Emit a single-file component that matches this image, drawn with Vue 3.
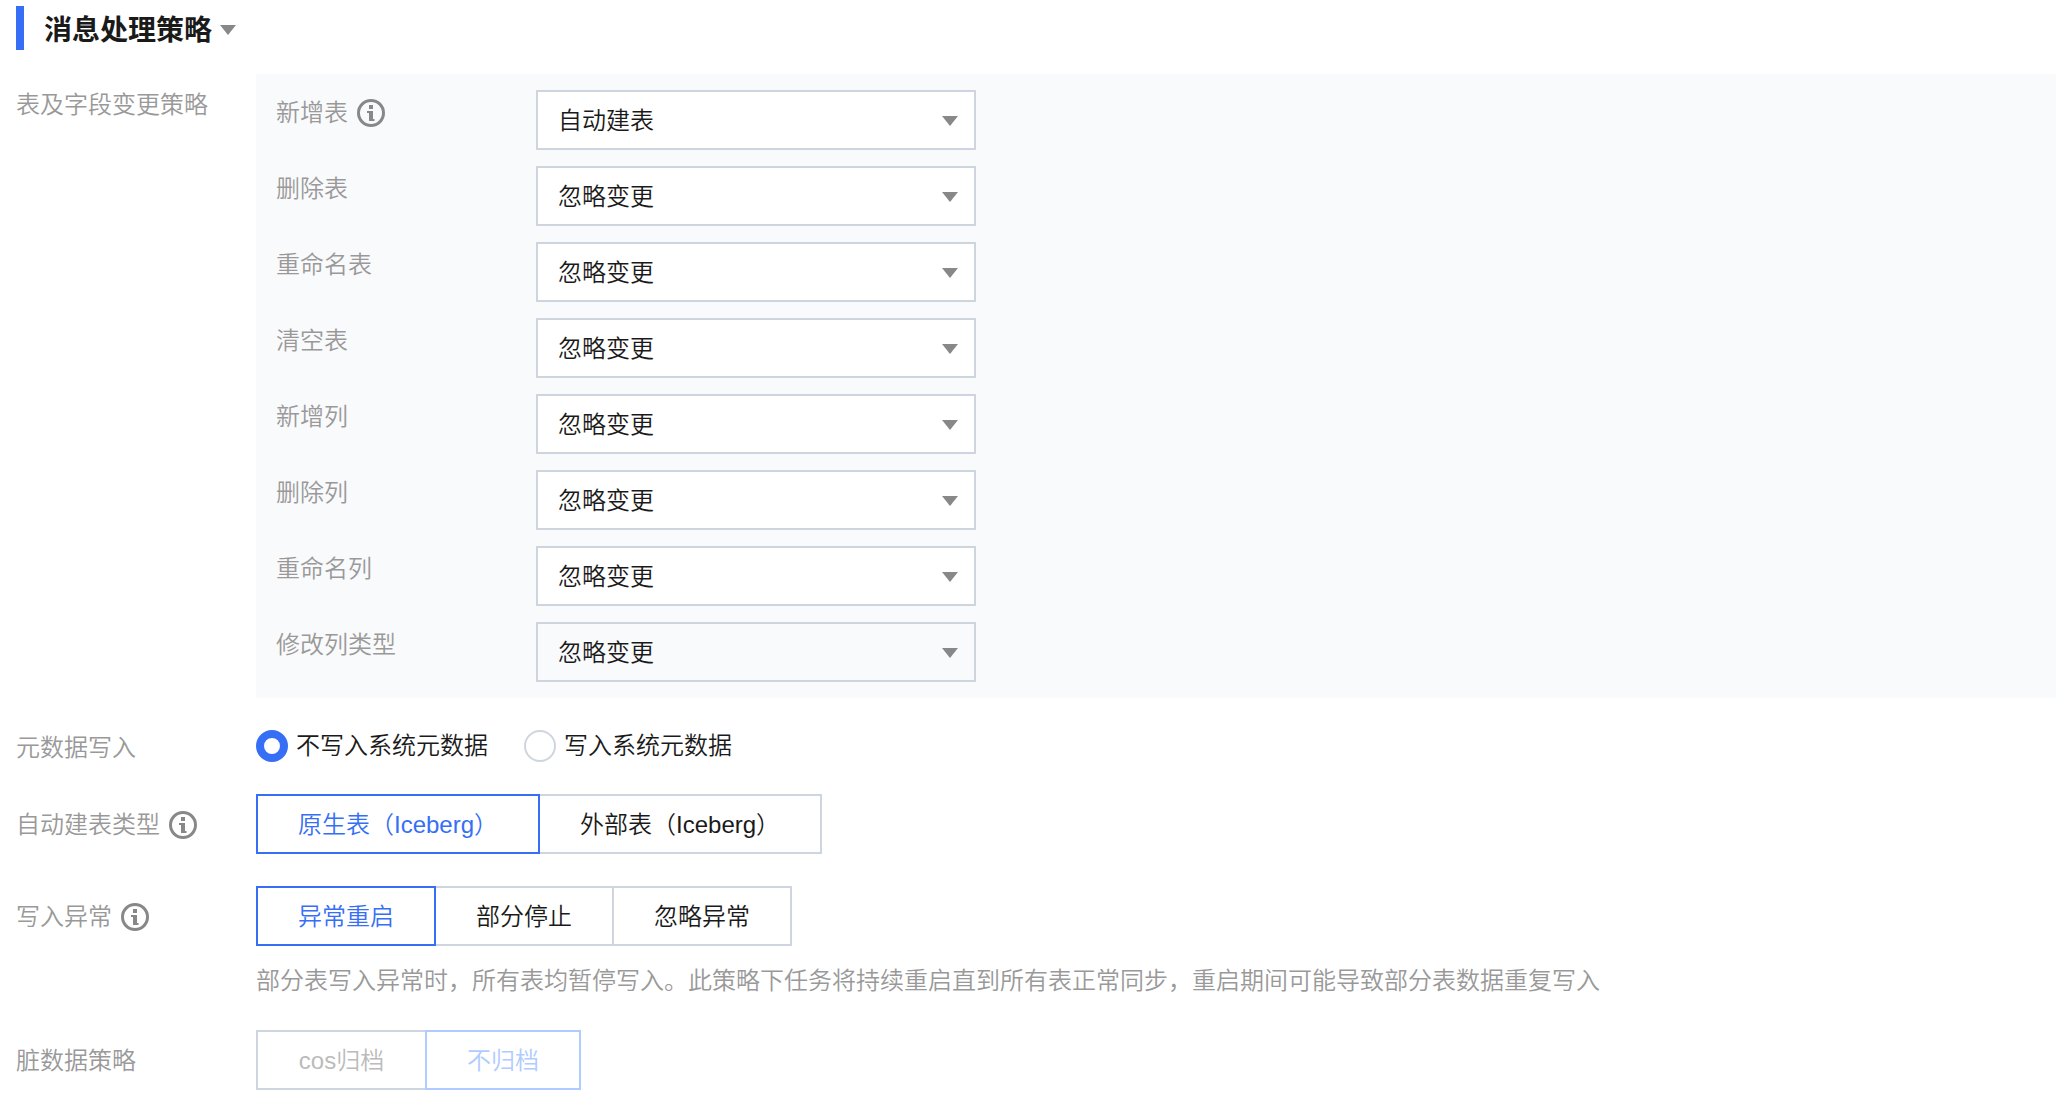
<script setup>
import { ref, reactive } from 'vue'

const open = ref(true)

const changeRules = reactive([
  { id: 'add-table', label: '新增表', value: '自动建表', options: ['自动建表', '忽略变更'], info: true },
  { id: 'drop-table', label: '删除表', value: '忽略变更', options: ['忽略变更'] },
  { id: 'rename-table', label: '重命名表', value: '忽略变更', options: ['忽略变更'] },
  { id: 'truncate-table', label: '清空表', value: '忽略变更', options: ['忽略变更'] },
  { id: 'add-column', label: '新增列', value: '忽略变更', options: ['忽略变更'] },
  { id: 'drop-column', label: '删除列', value: '忽略变更', options: ['忽略变更'] },
  { id: 'rename-column', label: '重命名列', value: '忽略变更', options: ['忽略变更'] },
  { id: 'alter-column', label: '修改列类型', value: '忽略变更', options: ['忽略变更'], muted: true },
])

const metaOptions = ['不写入系统元数据', '写入系统元数据']
const meta = ref(metaOptions[0])

const tableTypes = ['原生表（Iceberg）', '外部表（Iceberg）']
const tableType = ref(tableTypes[0])

const errorModes = ['异常重启', '部分停止', '忽略异常']
const errorMode = ref(errorModes[0])

const dirtyModes = ['cos归档', '不归档']
const dirtyMode = ref(dirtyModes[1])

const InfoIcon = 'M12 6h4v4h-4zM10 12h6v8h1.5v2h-5.500v-8h-2z'
</script>

<template>
  <main class="page">
    <h2 class="title">
      <button type="button" class="toggle" :aria-expanded="open" @click="open = !open">
        消息处理策略
        <svg class="caret" viewBox="0 0 16 10" aria-hidden="true"><path d="M0 0h16L8 10z" /></svg>
      </button>
    </h2>

    <div v-if="open" class="form">
      <div class="row">
        <span class="name">表及字段变更策略</span>
        <div class="panel">
          <div v-for="rule in changeRules" :key="rule.id" class="rule">
            <label class="rule-name" :for="rule.id">
              {{ rule.label }}
              <svg v-if="rule.info" class="info" viewBox="0 0 28 28" aria-hidden="true">
                <circle cx="14" cy="14" r="12.5" />
                <path :d="InfoIcon" />
              </svg>
            </label>
            <div class="picker">
              <select :id="rule.id" v-model="rule.value" :class="{ muted: rule.muted }">
                <option v-for="o in rule.options" :key="o">{{ o }}</option>
              </select>
              <svg class="caret" viewBox="0 0 16 10" aria-hidden="true"><path d="M0 0h16L8 10z" /></svg>
            </div>
          </div>
        </div>
      </div>

      <div class="row">
        <span id="meta-name" class="name name-short">元数据写入</span>
        <div class="radios" role="radiogroup" aria-labelledby="meta-name">
          <label v-for="o in metaOptions" :key="o" class="radio">
            <input v-model="meta" type="radio" name="meta" :value="o" />
            {{ o }}
          </label>
        </div>
      </div>

      <div class="row">
        <span id="type-name" class="name">
          自动建表类型
          <svg class="info" viewBox="0 0 28 28" aria-hidden="true">
            <circle cx="14" cy="14" r="12.5" />
            <path :d="InfoIcon" />
          </svg>
        </span>
        <div class="segments wide" role="group" aria-labelledby="type-name">
          <button
            v-for="o in tableTypes" :key="o" type="button"
            :class="{ active: o === tableType }" :aria-pressed="o === tableType"
            @click="tableType = o"
          >{{ o }}</button>
        </div>
      </div>

      <div class="row">
        <span id="error-name" class="name">
          写入异常
          <svg class="info" viewBox="0 0 28 28" aria-hidden="true">
            <circle cx="14" cy="14" r="12.5" />
            <path :d="InfoIcon" />
          </svg>
        </span>
        <div>
          <div class="segments" role="group" aria-labelledby="error-name">
            <button
              v-for="o in errorModes" :key="o" type="button"
              :class="{ active: o === errorMode }" :aria-pressed="o === errorMode"
              @click="errorMode = o"
            >{{ o }}</button>
          </div>
          <p class="hint">部分表写入异常时，所有表均暂停写入。此策略下任务将持续重启直到所有表正常同步，重启期间可能导致部分表数据重复写入</p>
        </div>
      </div>

      <div class="row">
        <span id="dirty-name" class="name">脏数据策略</span>
        <div class="segments archive" role="group" aria-labelledby="dirty-name">
          <button
            v-for="o in dirtyModes" :key="o" type="button" disabled
            :class="{ active: o === dirtyMode }" :aria-pressed="o === dirtyMode"
          >{{ o }}</button>
        </div>
      </div>
    </div>
  </main>
</template>

<style>
body {
  background: #fff;
}
</style>

<style scoped>
.page {
  padding: 6px 12px 16px 16px;
  font-family: "Liberation Sans", "Noto Sans CJK SC", sans-serif;
  font-size: 24px;
  font-weight: 350;
  color: #1a1a1a;
}

.page * {
  box-sizing: border-box;
}

button,
select {
  font: inherit;
  color: inherit;
}

.title {
  margin: 0 0 24px;
  height: 44px;
  padding-left: 20px;
  border-left: 8px solid #366ff6;
  font-size: 28px;
  font-weight: 700;
}

.toggle {
  display: flex;
  align-items: center;
  gap: 8px;
  height: 44px;
  padding: 0;
  border: 0;
  background: none;
}

.caret {
  width: 16px;
  height: 10px;
  margin-top: 2px;
  fill: #888;
}

.title .caret {
  margin-top: 4px;
}

.form {
  display: flex;
  flex-direction: column;
  gap: 32px;
}

.row {
  display: grid;
  grid-template-columns: 240px minmax(0, 1fr);
  align-items: start;
}

.name,
.rule-name {
  display: flex;
  align-items: center;
  gap: 9px;
  padding-top: 2px;
  line-height: 58px;
  color: #999;
}

.name-short {
  padding-top: 4px;
  line-height: 28px;
}

.info {
  width: 28px;
  height: 28px;
  fill: #888;
}

.info circle {
  fill: none;
  stroke: #888;
  stroke-width: 3;
}

.panel {
  display: flex;
  flex-direction: column;
  gap: 16px;
  padding: 16px 20px;
  background: #f9fafc;
}

.rule {
  display: grid;
  grid-template-columns: 260px minmax(0, 440px);
  align-items: start;
}

.rule-name {
  padding-top: 0;
  line-height: 46px;
}

.picker {
  display: grid;
  align-items: center;
}

.picker > * {
  grid-area: 1 / 1;
}

.picker .caret {
  justify-self: end;
  margin-right: 18px;
  pointer-events: none;
}

select {
  width: 100%;
  height: 60px;
  padding: 0 48px 0 20px;
  border: 2px solid #cfd5de;
  border-radius: 0;
  background: #fff;
  appearance: none;
}

select.muted {
  background: transparent;
}

.radios {
  display: flex;
  gap: 36px;
}

.radio {
  display: flex;
  align-items: center;
  gap: 8px;
  line-height: 32px;
}

.radio input {
  width: 32px;
  height: 32px;
  margin: 0;
  border: 2px solid #cfd5de;
  border-radius: 50%;
  background: #fff;
  appearance: none;
}

.radio input:checked {
  border: 8px solid #366ff6;
}

.segments {
  display: flex;
}

.segments button {
  height: 60px;
  padding: 0 40px 3px;
  border: 2px solid #cfd5de;
  background: #fff;
}

.segments button + button {
  margin-left: -2px;
}

.wide button {
  min-width: 284px;
}

.archive button:first-child {
  min-width: 171px;
}

.segments .active {
  position: relative;
  border-color: #366ff6;
  color: #366ff6;
}

.segments button:disabled {
  color: #bbb;
}

.segments .active:disabled {
  border-color: #b0cbff;
  color: #b0cbff;
}

.hint {
  margin: 18px 0 0;
  line-height: 34px;
  color: #999;
}
</style>
